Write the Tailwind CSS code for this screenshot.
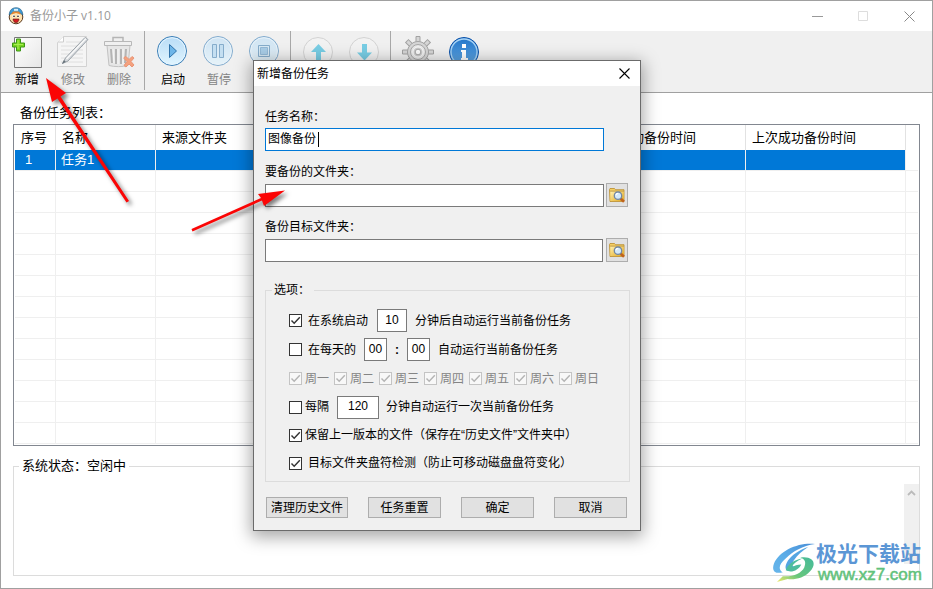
<!DOCTYPE html>
<html lang="zh-CN">
<head>
  <meta charset="UTF-8">
  <meta name="viewport" content="width=device-width, initial-scale=1.0">
  <title>备份小子 v1.10</title>
  <script src="https://cdn.jsdelivr.net/npm/@tailwindcss/browser@4"></script>
</head>
<body class="relative h-screen overflow-hidden bg-white font-['Liberation_Sans','Noto_Sans_CJK_SC',sans-serif] text-[12px] leading-[18px] text-black">

  <!-- Shared icons -->
  <svg class="absolute size-0" aria-hidden="true">
    <symbol id="check" viewBox="0 0 13 13">
      <path d="M2.5 6.5 5.2 9.3 10.8 3.2" fill="none" stroke="currentColor" stroke-width="1.4"/>
    </symbol>
    <symbol id="browse" viewBox="0 0 16 16">
      <path d="M.5 2.5 1 1.5h4.5l1 1.2H15v11.8H1z" fill="#f5cf62" stroke="#b98c2c" stroke-width=".8"/>
      <path d="M1.4 4.5H14.6V14H1.4z" fill="url(#folderFill)"/>
      <path d="M1.2 4.1h13.6" stroke="#a98743" stroke-width=".7"/>
      <path d="m11.5 11.5 3.5 3.3" stroke="#c0631c" stroke-width="2.6"/>
      <circle cx="9" cy="8.7" r="3.7" fill="#d3e9fa" stroke="#7388a3" stroke-width="1.3"/>
      <path d="M7 8.2a2.2 2.2 0 0 1 2.2-1.8" stroke="#fff" stroke-width="1.2" fill="none"/>
    </symbol>
    <linearGradient id="folderFill" x1="0" y1="0" x2="1" y2="1"><stop stop-color="#fff0b0"/><stop offset="1" stop-color="#e3a91e"/></linearGradient>
    <linearGradient id="blueDisc" x1="0" y1="0" x2="0" y2="1"><stop stop-color="#b9dcf6"/><stop offset="1" stop-color="#e0f5ff"/></linearGradient>
    <linearGradient id="infoDisc" x1="0" y1="0" x2="0" y2="1"><stop stop-color="#2275c8"/><stop offset="1" stop-color="#68aee9"/></linearGradient>
    <linearGradient id="paper" x1="0" y1="0" x2="1" y2="1"><stop stop-color="#fff"/><stop offset="1" stop-color="#e6e6e6"/></linearGradient>
  </svg>

  <!-- Main window -->
  <div class="flex h-full flex-col border border-[#a0a0a0]">
    <header class="flex h-[30px] shrink-0 items-center pl-[7px]">
      <svg class="h-[18px] w-4" viewBox="0 0 16 18">
        <circle cx="8" cy="10" r="6.8" fill="#ffe2ae" stroke="#5b3a20"/>
        <path d="M1.2 8C1.5 2.8 4.3.8 8 .8s6.500 2 6.800 7.200L12 6 8 5.300 4 6z" fill="#3f9bd6" stroke="#245b83" stroke-width=".7"/>
        <path d="M3 7.500 5 4.600h6l2 2.900-5-1.500z" fill="#e8862e"/>
        <path d="M6 1.800h4v2H6z" fill="#d9effa"/>
        <ellipse cx="5.700" cy="9" rx="1.300" ry="1.600" fill="#fff"/>
        <ellipse cx="10.300" cy="9" rx="1.300" ry="1.600" fill="#fff"/>
        <circle cx="6" cy="9.300" r=".8"/><circle cx="10" cy="9.300" r=".8"/>
        <path d="M5 12h6c-.3 2.500-1.400 3.700-3 3.700s-2.700-1.200-3-3.700z" fill="#d31b20" stroke="#5c1414" stroke-width=".6"/>
      </svg>
      <h1 class="ml-[6px] flex-1 font-['Open_Sans','Noto_Sans_CJK_SC',sans-serif] text-[#999]">备份小子 v1.10</h1>
      <button aria-label="最小化" class="flex h-full w-[46px] items-center justify-center text-[#999]"><svg class="size-[11px]" viewBox="0 0 11 11"><path d="M0 5.500h11" stroke="currentColor"/></svg></button>
      <button aria-label="最大化" disabled class="flex h-full w-[46px] items-center justify-center text-[#ddd]"><svg class="size-[11px]" viewBox="0 0 11 11"><path d="M.5.500h9v9h-9z" fill="none" stroke="currentColor"/></svg></button>
      <button aria-label="关闭" class="flex h-full w-[46px] items-center justify-center text-[#888]"><svg class="size-[11px]" viewBox="0 0 11 11"><path d="m.5.500 10 10m0-10-10 10" stroke="currentColor"/></svg></button>
    </header>

    <!-- Toolbar -->
    <nav class="flex h-[62px] shrink-0 items-start border-b border-[#a0a0a0] bg-[#f0f0f0] pl-[3px]">
      <button class="flex w-[46px] flex-col items-center gap-[2px] pt-[4px]">
        <svg class="size-[34px]" viewBox="0 0 34 34">
          <path d="M4.500 2.500h27v30h-27z" fill="url(#paper)" stroke="#777"/>
          <path d="M6.500 4h4v4h4v4h-4v4h-4v-4h-4V8h4z" fill="#78d51e" stroke="#3c9718"/>
          <path d="M8 5v9M4 9.500h9" stroke="#a9ee55"/>
        </svg>
        <span>新增</span>
      </button>
      <button disabled class="flex w-[46px] flex-col items-center gap-[2px] pt-[4px] text-[#848484]">
        <svg class="size-[34px]" viewBox="0 0 34 34">
          <path d="M7.500 1.500h23v30h-29v-24z" fill="#f5f5f5" stroke="#d2d2d2"/>
          <path d="M2 7h5.500V1.500" fill="#fff" stroke="#ccc"/>
          <path d="M10 7h17M5 11h22M5 15h22M5 19h22M5 23h22M5 27h22" stroke="#dedede"/>
          <path d="M29 2.500 9.500 23l-3 5.500L12 26 32 4.500z" fill="#d5d9dd" stroke="#9ba2a8"/>
          <path d="M30 3.500 10.500 24" stroke="#f9f9f9" stroke-width="1.500"/>
          <path d="m6 29 2-4 1.800 1.700z" fill="#68747c"/>
        </svg>
        <span>修改</span>
      </button>
      <button disabled class="flex w-[46px] flex-col items-center gap-[2px] pt-[4px] text-[#848484]">
        <svg class="size-[34px]" viewBox="0 0 34 34">
          <path d="M5 10.500h23l-2 20c-5 1.500-14 1.500-19 0z" fill="#e6e6e6" stroke="#c2c2c2"/>
          <path d="M2.500 6.500h27v4h-27z" fill="#f0f0f0" stroke="#b8b8b8"/>
          <path d="M11 6V2.500h10V6" fill="none" stroke="#b5b5b5" stroke-width="1.500"/>
          <path d="m9 14 1 14M14 14v15M19 14v15M24 14l-1 14" stroke="#b4b4b4" stroke-width="2"/>
          <path d="m11 14 1 14M16 14v15M21 14v15" stroke="#f7f7f7"/>
          <path d="m22 22.500 2-1 3 3 3-3 2 1.500-3 3.500 3 3.500-2 2-3-3-3 3-2-1.500 3-4-3-3z" fill="#f4a17e" stroke="#e99678"/>
        </svg>
        <span>删除</span>
      </button>
      <div class="mr-[5px] ml-[2px] h-[59px] w-px bg-[#a8a8a8]"></div>
      <button class="flex w-[46px] flex-col items-center gap-[2px] pt-[4px]">
        <svg class="size-[34px]" viewBox="0 0 34 34">
          <circle cx="16" cy="16" r="14.500" fill="url(#blueDisc)" stroke="#3a7db5"/>
          <circle cx="16" cy="16" r="13.300" fill="none" stroke="#e4f4ff"/>
          <path d="M13.500 9.500v13l7-6.500z" fill="#6db5e8" stroke="#2f72aa"/>
        </svg>
        <span>启动</span>
      </button>
      <button disabled class="flex w-[46px] flex-col items-center gap-[2px] pt-[4px] text-[#848484]">
        <svg class="size-[34px] opacity-60" viewBox="0 0 34 34">
          <circle cx="16" cy="16" r="14.500" fill="url(#blueDisc)" stroke="#3a7db5"/>
          <circle cx="16" cy="16" r="13.300" fill="none" stroke="#e4f4ff"/>
          <path d="M10.500 9.500h4v13h-4zM17.500 9.500h4v13h-4z" fill="#a8d4f2" stroke="#3f7fb3"/>
        </svg>
        <span>暂停</span>
      </button>
      <button disabled aria-label="停止" class="flex w-[46px] justify-center pt-[4px]">
        <svg class="size-[34px] opacity-60" viewBox="0 0 34 34">
          <circle cx="16" cy="16" r="14.500" fill="url(#blueDisc)" stroke="#3a7db5"/>
          <circle cx="16" cy="16" r="13.300" fill="none" stroke="#e4f4ff"/>
          <path d="M10.500 10.500h11v11h-11z" fill="#c7e5f8" stroke="#3f7fb3"/>
          <path d="M12.500 12.500h7v7h-7z" fill="#79b6e2" stroke="#5795c6"/>
        </svg>
      </button>
      <div class="mr-[5px] ml-[2px] h-[59px] w-px bg-[#a8a8a8]"></div>
      <button disabled aria-label="上移" class="flex w-[46px] justify-center pt-[4px]">
        <svg class="size-[34px]" viewBox="0 0 34 34">
          <circle cx="16" cy="17" r="14.500" fill="#f2f2f2" stroke="#d3d3d3"/>
          <path d="m16.500 9 7.500 8h-5v8h-5v-8H9z" fill="#78cde4"/>
        </svg>
      </button>
      <button disabled aria-label="下移" class="flex w-[46px] justify-center pt-[4px]">
        <svg class="size-[34px]" viewBox="0 0 34 34">
          <circle cx="16" cy="17" r="14.500" fill="#f2f2f2" stroke="#d3d3d3"/>
          <path d="M16.500 25.500 9 17.500h5V9h5v8.500h5z" fill="#78cde4"/>
        </svg>
      </button>
      <div class="mr-[5px] ml-[2px] h-[59px] w-px bg-[#a8a8a8]"></div>
      <button aria-label="设置" class="flex w-[46px] justify-center pt-[4px]">
        <svg class="size-[34px]" viewBox="0 0 34 34">
          <g fill="#d6d6d6" stroke="#a2a2a2">
            <path d="M14 8V1.500h4V8z"/>
            <path d="M14 8V1.500h4V8z" transform="rotate(45 16 17)"/>
            <path d="M14 8V1.500h4V8z" transform="rotate(90 16 17)"/>
            <path d="M14 8V1.500h4V8z" transform="rotate(135 16 17)"/>
            <path d="M14 8V1.500h4V8z" transform="rotate(180 16 17)"/>
            <path d="M14 8V1.500h4V8z" transform="rotate(225 16 17)"/>
            <path d="M14 8V1.500h4V8z" transform="rotate(270 16 17)"/>
            <path d="M14 8V1.500h4V8z" transform="rotate(315 16 17)"/>
            <circle cx="16" cy="17" r="10.500"/>
          </g>
          <circle cx="16" cy="17" r="9.800" fill="#d6d6d6"/>
          <circle cx="16" cy="17" r="7.500" fill="#e8e8e8" stroke="#a8a8a8"/>
          <circle cx="16" cy="17" r="5" fill="#ccc" stroke="#fafafa"/>
          <circle cx="16" cy="17" r="2.800" fill="#fafafa" stroke="#a8a8a8"/>
        </svg>
      </button>
      <button aria-label="关于" class="flex w-[46px] justify-center pt-[4px]">
        <svg class="size-[34px]" viewBox="0 0 34 34">
          <circle cx="16" cy="17" r="14.500" fill="url(#infoDisc)" stroke="#0a50a8"/>
          <circle cx="16" cy="17" r="13" fill="none" stroke="#a9d4f5" stroke-width="1.300"/>
          <path d="M14 9h4v4h-4zM13 15h5v8h2v2h-7v-2h1v-6h-1z" fill="#fff"/>
        </svg>
      </button>
    </nav>

    <main class="flex min-h-0 flex-1 flex-col px-[12px] pb-[12px] text-[13px]">
      <h2 class="flex h-[31px] shrink-0 items-center pt-[8px] pl-[7px]">备份任务列表：</h2>

      <!-- Task list -->
      <div class="min-h-0 flex-1 overflow-hidden border border-[#828790] pr-px pl-px">
        <table class="w-full table-fixed border-separate border-spacing-0 text-left [&_td]:h-[21px] [&_td]:border-r [&_td]:border-b [&_td]:border-[#efefef] [&_td]:p-0 [&_td:last-child]:border-r-0 [&_th]:h-[25px] [&_th]:border-r [&_th]:border-[#e2e2e2] [&_th]:p-0 [&_th]:pl-[6px] [&_th]:font-normal [&_th]:whitespace-nowrap [&_th:last-child]:border-r-0">
          <colgroup>
            <col class="w-[41px]"><col class="w-[100px]"><col><col><col>
            <col class="w-[160px]"><col class="w-[160px]"><col class="w-[12px]">
          </colgroup>
          <thead>
            <tr><th>序号</th><th>名称</th><th>来源文件夹</th><th>目标文件夹</th><th>状态</th><th>上次启动备份时间</th><th>上次成功备份时间</th><th></th></tr>
          </thead>
          <tbody>
            <tr class="text-white [&_td:not(:last-child)]:bg-[#0078d7]"><td><span class="pl-[10px]">1</span></td><td><span class="pl-[5px]">任务1</span></td><td></td><td></td><td></td><td></td><td></td><td></td></tr>
            <tr><td></td><td></td><td></td><td></td><td></td><td></td><td></td><td></td></tr>
            <tr><td></td><td></td><td></td><td></td><td></td><td></td><td></td><td></td></tr>
            <tr><td></td><td></td><td></td><td></td><td></td><td></td><td></td><td></td></tr>
            <tr><td></td><td></td><td></td><td></td><td></td><td></td><td></td><td></td></tr>
            <tr><td></td><td></td><td></td><td></td><td></td><td></td><td></td><td></td></tr>
            <tr><td></td><td></td><td></td><td></td><td></td><td></td><td></td><td></td></tr>
            <tr><td></td><td></td><td></td><td></td><td></td><td></td><td></td><td></td></tr>
            <tr><td></td><td></td><td></td><td></td><td></td><td></td><td></td><td></td></tr>
            <tr><td></td><td></td><td></td><td></td><td></td><td></td><td></td><td></td></tr>
            <tr><td></td><td></td><td></td><td></td><td></td><td></td><td></td><td></td></tr>
            <tr><td></td><td></td><td></td><td></td><td></td><td></td><td></td><td></td></tr>
            <tr><td></td><td></td><td></td><td></td><td></td><td></td><td></td><td></td></tr>
            <tr><td></td><td></td><td></td><td></td><td></td><td></td><td></td><td></td></tr>
          </tbody>
        </table>
      </div>

      <!-- System status -->
      <fieldset class="mt-[11px] h-[119px] shrink-0 border border-[#dcdcdc]">
        <legend class="ml-[5px] px-[3px]">系统状态：空闲中</legend>
        <div class="mt-[9px] ml-auto flex h-[80px] w-[15px] flex-col items-center justify-between bg-[#f0f0f0] py-[6px] text-[#bbb]">
          <svg class="h-[6px] w-[9px]" viewBox="0 0 9 6"><path d="m1 5 3.500-3.500L8 5" fill="none" stroke="currentColor" stroke-width="1.800"/></svg>
          <svg class="h-[6px] w-[9px]" viewBox="0 0 9 6"><path d="m1 1 3.500 3.500L8 1" fill="none" stroke="currentColor" stroke-width="1.800"/></svg>
        </div>
      </fieldset>
    </main>
  </div>

  <!-- New task dialog -->
  <form role="dialog" aria-labelledby="dlg-title" class="absolute top-[60px] left-[253px] w-[388px] border border-[#6b6b6b] bg-[#f0f0f0] shadow-[0_4px_16px_2px_rgba(0,0,0,0.35)]">
    <div class="flex h-[25px] items-center bg-white pl-[3px]">
      <h2 id="dlg-title" class="flex-1">新增备份任务</h2>
      <button type="button" aria-label="关闭" class="flex h-full w-[31px] items-center justify-center"><svg class="size-[11px]" viewBox="0 0 11 11"><path d="m.5.500 10 10m0-10-10 10" stroke="#000" stroke-width="1.100"/></svg></button>
    </div>

    <div class="px-[10px] pt-[22px] pb-[12px] pl-[11px]">
      <label for="name" class="block">任务名称：</label>
      <div class="mt-[2px] mb-[11px] flex h-[24px] items-start pr-[26px]">
        <div class="flex h-[23px] flex-1 items-center border border-[#0078d7] bg-white pl-[2px]">
          <input id="name" type="text" value="图像备份" class="w-[51px] border-r border-black leading-[15px] outline-none">
        </div>
      </div>
      <label for="src" class="block">要备份的文件夹：</label>
      <div class="mt-[2px] mb-[11px] flex h-[24px] items-end gap-[2px] pr-[2px]">
        <input id="src" type="text" class="h-[23px] min-w-0 flex-1 border border-[#7a7a7a] bg-white px-[3px]">
        <button type="button" aria-label="浏览" class="flex h-[24px] w-[22px] items-center justify-center border border-[#adadad] bg-[#e1e1e1]"><svg class="size-4"><use href="#browse"/></svg></button>
      </div>
      <label for="dst" class="block">备份目标文件夹：</label>
      <div class="mt-[2px] flex h-[24px] items-end gap-[3px] pr-[2px]">
        <input id="dst" type="text" class="h-[23px] min-w-0 flex-1 border border-[#7a7a7a] bg-white px-[3px]">
        <button type="button" aria-label="浏览" class="flex h-[24px] w-[22px] items-center justify-center border border-[#adadad] bg-[#e1e1e1]"><svg class="size-4"><use href="#browse"/></svg></button>
      </div>

      <fieldset class="mt-[19px] border border-[#dcdcdc] pt-[7px] pb-[4px] pl-[23px] whitespace-nowrap">
        <legend class="-ml-[17px] pr-[4px] pl-[2px]">选项：</legend>
        <div class="flex h-[29px] items-center">
          <span class="relative mr-[6px] size-[13px]"><input id="boot" type="checkbox" checked class="peer block size-[13px] appearance-none border border-[#333] bg-white"><svg class="pointer-events-none absolute inset-0 hidden size-[13px] text-[#333] peer-checked:block"><use href="#check"/></svg></span>
          <label for="boot" class="w-[69px]">在系统启动</label>
          <input aria-label="分钟" type="text" value="10" class="mr-[8px] h-[23px] w-[30px] border border-[#7a7a7a] bg-white pb-[2px] text-center">
          <span>分钟后自动运行当前备份任务</span>
        </div>
        <div class="flex h-[29px] items-center">
          <span class="relative mr-[6px] size-[13px]"><input id="daily" type="checkbox" class="peer block size-[13px] appearance-none border border-[#333] bg-white"><svg class="pointer-events-none absolute inset-0 hidden size-[13px] text-[#333] peer-checked:block"><use href="#check"/></svg></span>
          <label for="daily" class="w-[56px]">在每天的</label>
          <input aria-label="小时" type="text" value="00" class="h-[23px] w-[23px] border border-[#7a7a7a] bg-white pb-[2px] text-center">
          <span class="w-[20px] text-center font-bold">:</span>
          <input aria-label="分" type="text" value="00" class="mr-[8px] h-[23px] w-[23px] border border-[#7a7a7a] bg-white pb-[2px] text-center">
          <span>自动运行当前备份任务</span>
        </div>
        <div class="flex h-[29px] items-center text-[#848484] [&>label]:flex [&>label]:w-[45px] [&>label]:items-center [&>label]:gap-[3px]">
          <label><span class="relative size-[13px]"><input type="checkbox" checked disabled class="block size-[13px] appearance-none border border-[#c4c4c4] bg-[#f8f8f8]"><svg class="absolute inset-0 size-[13px] text-[#b4b4b4]"><use href="#check"/></svg></span>周一</label>
          <label><span class="relative size-[13px]"><input type="checkbox" checked disabled class="block size-[13px] appearance-none border border-[#c4c4c4] bg-[#f8f8f8]"><svg class="absolute inset-0 size-[13px] text-[#b4b4b4]"><use href="#check"/></svg></span>周二</label>
          <label><span class="relative size-[13px]"><input type="checkbox" checked disabled class="block size-[13px] appearance-none border border-[#c4c4c4] bg-[#f8f8f8]"><svg class="absolute inset-0 size-[13px] text-[#b4b4b4]"><use href="#check"/></svg></span>周三</label>
          <label><span class="relative size-[13px]"><input type="checkbox" checked disabled class="block size-[13px] appearance-none border border-[#c4c4c4] bg-[#f8f8f8]"><svg class="absolute inset-0 size-[13px] text-[#b4b4b4]"><use href="#check"/></svg></span>周四</label>
          <label><span class="relative size-[13px]"><input type="checkbox" checked disabled class="block size-[13px] appearance-none border border-[#c4c4c4] bg-[#f8f8f8]"><svg class="absolute inset-0 size-[13px] text-[#b4b4b4]"><use href="#check"/></svg></span>周五</label>
          <label><span class="relative size-[13px]"><input type="checkbox" checked disabled class="block size-[13px] appearance-none border border-[#c4c4c4] bg-[#f8f8f8]"><svg class="absolute inset-0 size-[13px] text-[#b4b4b4]"><use href="#check"/></svg></span>周六</label>
          <label><span class="relative size-[13px]"><input type="checkbox" checked disabled class="block size-[13px] appearance-none border border-[#c4c4c4] bg-[#f8f8f8]"><svg class="absolute inset-0 size-[13px] text-[#b4b4b4]"><use href="#check"/></svg></span>周日</label>
        </div>
        <div class="flex h-[28px] items-center">
          <span class="relative mr-[3px] size-[13px]"><input id="every" type="checkbox" class="peer block size-[13px] appearance-none border border-[#333] bg-white"><svg class="pointer-events-none absolute inset-0 hidden size-[13px] text-[#333] peer-checked:block"><use href="#check"/></svg></span>
          <label for="every" class="w-[32px]">每隔</label>
          <input aria-label="间隔分钟" type="text" value="120" class="mr-[7px] h-[23px] w-[42px] border border-[#7a7a7a] bg-white pb-[2px] text-center">
          <span>分钟自动运行一次当前备份任务</span>
        </div>
        <div class="flex h-[28px] items-center">
          <span class="relative mr-[3px] size-[13px]"><input id="keep" type="checkbox" checked class="peer block size-[13px] appearance-none border border-[#333] bg-white"><svg class="pointer-events-none absolute inset-0 hidden size-[13px] text-[#333] peer-checked:block"><use href="#check"/></svg></span>
          <label for="keep">保留上一版本的文件（保存在“历史文件”文件夹中）</label>
        </div>
        <div class="flex h-[28px] items-center">
          <span class="relative mr-[6px] size-[13px]"><input id="drive" type="checkbox" checked class="peer block size-[13px] appearance-none border border-[#333] bg-white"><svg class="pointer-events-none absolute inset-0 hidden size-[13px] text-[#333] peer-checked:block"><use href="#check"/></svg></span>
          <label for="drive">目标文件夹盘符检测（防止可移动磁盘盘符变化）</label>
        </div>
      </fieldset>

      <div class="mt-[15px] flex justify-between pr-[3px] pl-px [&>button]:h-[21px] [&>button]:w-[73px] [&>button]:border [&>button]:border-[#adadad] [&>button]:bg-[#e1e1e1] [&>button]:pt-px [&>button]:leading-[18px] [&>button:first-child]:w-[82px]">
        <button type="button">清理历史文件</button>
        <button type="button">任务重置</button>
        <button type="submit">确定</button>
        <button type="button">取消</button>
      </div>
    </div>
  </form>

  <!-- Pointer arrows -->
  <svg class="pointer-events-none absolute top-0 left-0 h-[240px] w-[300px] drop-shadow-[3px_3px_2px_rgba(0,0,0,0.5)]" viewBox="0 0 300 240" fill="#fb0505">
    <path d="M46 78 66 93 60.500 96.500 129 201 126.500 202.500 57.500 98.500 52 102z"/>
    <path d="M285 190.500 264 206 262 200.500 192.500 231.500 191.500 229 261 198 258 194z"/>
  </svg>

  <!-- Watermark -->
  <div class="pointer-events-none absolute right-[11px] bottom-[5px] flex items-center gap-px">
    <svg class="h-[41px] w-[42px]" viewBox="0 0 43 42">
      <linearGradient id="swirl" x1="1" y1="0" x2="0" y2="1"><stop stop-color="#4a8fd8"/><stop offset=".6" stop-color="#5caee8"/><stop offset="1" stop-color="#67b5ea"/></linearGradient>
      <linearGradient id="leaf" x1="1" y1="0" x2="0" y2="1"><stop stop-color="#45ba9b"/><stop offset=".6" stop-color="#68c67c"/><stop offset="1" stop-color="#f1e96a"/></linearGradient>
      <path d="M43 1C27-1 7 7 1 21c-3 8 2 11 9 9-5-3-4-8 3-14C21 8 30 3 43 1z" fill="url(#swirl)"/>
      <path d="M36 4C23 8 12 18 13 26c1 4 7 3 11-2-5 1-6-2-2-7 3-5 8-9 14-13z" fill="#54a5e2"/>
      <path d="M28 15c14-2 17 7 10 14-6 7-16 9-23 8l-11 3 6-6c10 1 19-3 22-9 2-5 1-9-4-10z" fill="url(#leaf)"/>
      <path d="M30 16c-8 1-15 6-17 12 6 3 13 0 16-6-4 0-7 1-10 3 2-4 6-7 11-9z" fill="#4fbd9d"/>
    </svg>
    <div class="flex flex-col">
      <span class="text-[21px] leading-[22px] font-bold text-[#5b96d5]">极光下载站</span>
      <span class="pl-[2px] text-[17px] leading-[19px] text-[#62c27b] [-webkit-text-stroke:0.5px_#62c27b]">www.xz7.com</span>
    </div>
  </div>
</body>
</html>
